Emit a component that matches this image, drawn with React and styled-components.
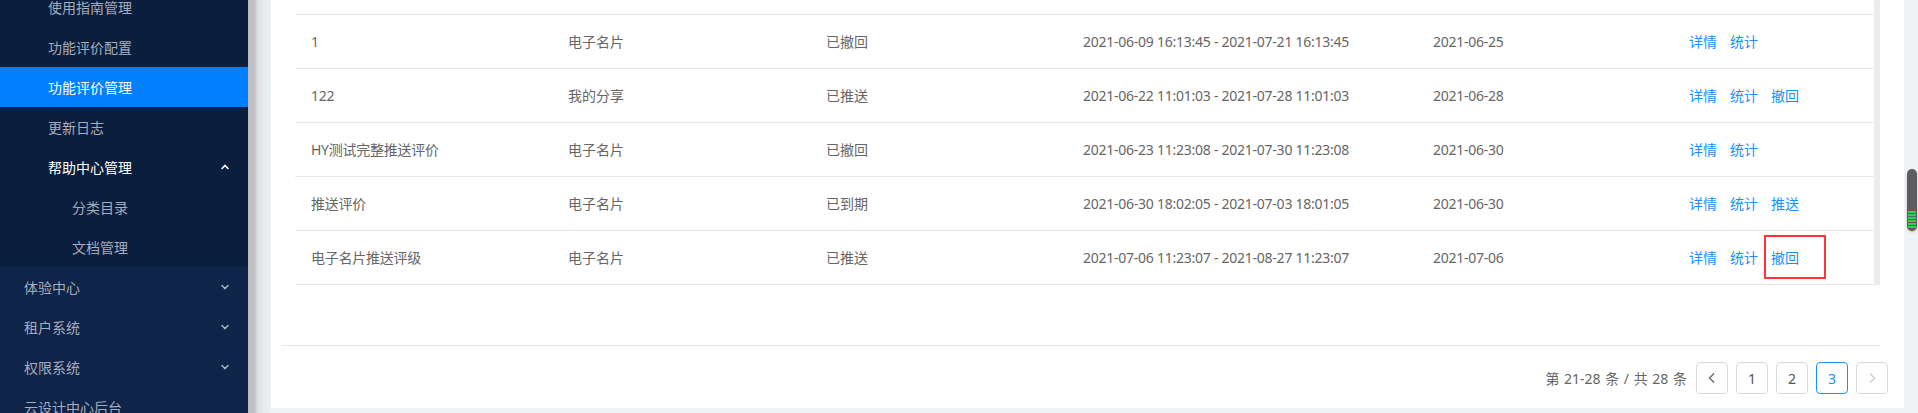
import React from "react";
import styled, { createGlobalStyle, css } from "styled-components";

const GlobalStyle = createGlobalStyle`
  html, body {
    margin: 0;
    padding: 0;
    background: #f0f2f5;
    font-family: "Noto Sans", "Noto Sans CJK SC", sans-serif;
    font-size: 14px;
  }
`;

const Page = styled.div`
  position: relative;
  display: flex;
  width: 1918px;
  height: 413px;
  overflow: hidden;
  background: #f0f2f5;
`;

// ---- sidebar ----

const Sider = styled.aside`
  width: 248px;
  flex: none;
  background: #0f2449;
  overflow: hidden;
`;

const MenuList = styled.div`
  margin-top: -13px;
`;

const SubMenu = styled.div`
  background: #0b1e3e;
`;

const MenuItem = styled.div`
  display: flex;
  align-items: center;
  justify-content: space-between;
  height: 40px;
  padding-left: ${p => p.indent}px;
  padding-right: 18px;
  color: ${p => (p.open || p.active ? "#ffffff" : "#a7adba")};
  background: ${p => (p.active ? "#0080ff" : "transparent")};
  white-space: nowrap;
`;

const Arrow = styled.svg`
  width: 10px;
  height: 10px;
  flex: none;
`;

const Chevron = ({ up }) => (
  <Arrow viewBox="0 0 10 10">
    <path
      d={up ? "M2 6.5 L5 3.5 L8 6.5" : "M2 3.5 L5 6.5 L8 3.5"}
      fill="none"
      stroke="currentColor"
      strokeWidth="1.6"
      strokeLinecap="round"
    />
  </Arrow>
);

const Shade = styled.div`
  width: 23px;
  flex: none;
  background: linear-gradient(
    to right,
    #bdbdc0 0px,
    #c4c4c7 7px,
    #d9dadd 9px,
    #e6e7eb 14px,
    #eceef2 23px
  );
`;

// ---- content ----

const Main = styled.main`
  flex: 1;
  display: flex;
  flex-direction: column;
  padding: 0 14px 5px 0;
  min-width: 0;
`;

const Card = styled.section`
  flex: 1;
  display: flex;
  flex-direction: column;
  background: #fff;
  padding: 0 24px 0 11px;
`;

const TableBody = styled.div`
  display: flex;
  margin-left: 13px;
`;

const Rows = styled.div`
  flex: 1;
`;

const Track = styled.div`
  width: 6px;
  flex: none;
  background: #ececec;
`;

const Row = styled.div`
  display: grid;
  grid-template-columns: 257px 258px 257px 350px 256px 1fr;
  height: ${p => (p.partial ? 14 : 53)}px;
  border-bottom: 1px solid #e8e8e8;
  align-items: center;
  color: #666;
`;

const Cell = styled.div`
  padding-left: 16px;
  white-space: nowrap;
  line-height: 22px;
  letter-spacing: ${p => (p.numeric ? "-0.25px" : "0")};
`;

const Actions = styled(Cell)`
  display: flex;
  gap: 13px;
`;

const Link = styled.a`
  position: relative;
  color: #1890ff;
  cursor: pointer;
  ${p =>
    p.marked &&
    css`
      &::after {
        content: "";
        position: absolute;
        left: -7px;
        top: -12px;
        width: 58px;
        height: 40px;
        border: 2px solid #ff3535;
      }
    `}
`;

const Divider = styled.div`
  margin-top: 60px;
  height: 1px;
  background: #e8e8e8;
`;

const Pager = styled.div`
  display: flex;
  align-items: center;
  justify-content: flex-end;
  gap: 8px;
  margin: 16px -8px 0 0;
`;

const Total = styled.span`
  color: #666;
  margin-right: 1px;
  word-spacing: 1px;
`;

const PageBtn = styled.button`
  width: 32px;
  height: 32px;
  padding: 0;
  display: flex;
  align-items: center;
  justify-content: center;
  border: 1px solid ${p => (p.active ? "#1890ff" : "#d9d9d9")};
  border-radius: 4px;
  background: #fff;
  font-family: inherit;
  font-size: 14px;
  color: ${p => (p.active ? "#1890ff" : p.disabled ? "#c8c8c8" : "#555")};
`;

const PageArrow = ({ dir }) => (
  <svg width="10" height="12" viewBox="0 0 10 12">
    <path
      d={dir === "prev" ? "M7 1.5 L2.5 6 L7 10.5" : "M3 1.5 L7.5 6 L3 10.5"}
      fill="none"
      stroke="currentColor"
      strokeWidth="1.1"
    />
  </svg>
);

const Thumb = styled.div`
  position: absolute;
  right: 1px;
  top: 169px;
  width: 10px;
  height: 62px;
  border-radius: 5px;
  background: #5d5d5f;
  box-shadow: 0 1px 2px rgba(0, 0, 0, 0.25);

  &::after {
    content: "";
    position: absolute;
    left: 1px;
    right: 1px;
    top: 42px;
    height: 17px;
    background: repeating-linear-gradient(
      to bottom,
      #34d04a 0px,
      #34d04a 2px,
      #5d5d5f 2px,
      #5d5d5f 3px
    );
  }
`;

const rows = [
  ["1", "电子名片", "已撤回", "2021-06-09 16:13:45 - 2021-07-21 16:13:45", "2021-06-25", ["详情", "统计"]],
  ["122", "我的分享", "已推送", "2021-06-22 11:01:03 - 2021-07-28 11:01:03", "2021-06-28", ["详情", "统计", "撤回"]],
  ["HY测试完整推送评价", "电子名片", "已撤回", "2021-06-23 11:23:08 - 2021-07-30 11:23:08", "2021-06-30", ["详情", "统计"]],
  ["推送评价", "电子名片", "已到期", "2021-06-30 18:02:05 - 2021-07-03 18:01:05", "2021-06-30", ["详情", "统计", "推送"]],
  ["电子名片推送评级", "电子名片", "已推送", "2021-07-06 11:23:07 - 2021-08-27 11:23:07", "2021-07-06", ["详情", "统计", "撤回"]],
];

export default function App() {
  return (
    <Page>
      <GlobalStyle />
      <Sider>
        <MenuList>
          <SubMenu>
            <MenuItem indent={48}>使用指南管理</MenuItem>
            <MenuItem indent={48}>功能评价配置</MenuItem>
            <MenuItem indent={48} active>功能评价管理</MenuItem>
            <MenuItem indent={48}>更新日志</MenuItem>
            <MenuItem indent={48} open>
              帮助中心管理
              <Chevron up />
            </MenuItem>
            <MenuItem indent={72}>分类目录</MenuItem>
            <MenuItem indent={72}>文档管理</MenuItem>
          </SubMenu>
          <MenuItem indent={24}>
            体验中心
            <Chevron />
          </MenuItem>
          <MenuItem indent={24}>
            租户系统
            <Chevron />
          </MenuItem>
          <MenuItem indent={24}>
            权限系统
            <Chevron />
          </MenuItem>
          <MenuItem indent={24}>云设计中心后台</MenuItem>
        </MenuList>
      </Sider>
      <Shade />
      <Main>
        <Card>
          <TableBody>
            <Rows>
              <Row partial />
              {rows.map((r, i) => (
                <Row key={i}>
                  <Cell numeric>{r[0]}</Cell>
                  <Cell>{r[1]}</Cell>
                  <Cell>{r[2]}</Cell>
                  <Cell numeric>{r[3]}</Cell>
                  <Cell numeric>{r[4]}</Cell>
                  <Actions>
                    {r[5].map((a, j) => (
                      <Link key={a} marked={i === 4 && j === 2}>
                        {a}
                      </Link>
                    ))}
                  </Actions>
                </Row>
              ))}
            </Rows>
            <Track />
          </TableBody>
          <Divider />
          <Pager>
            <Total>第 21-28 条 / 共 28 条</Total>
            <PageBtn>
              <PageArrow dir="prev" />
            </PageBtn>
            <PageBtn>1</PageBtn>
            <PageBtn>2</PageBtn>
            <PageBtn active>3</PageBtn>
            <PageBtn disabled>
              <PageArrow dir="next" />
            </PageBtn>
          </Pager>
        </Card>
      </Main>
      <Thumb />
    </Page>
  );
}
